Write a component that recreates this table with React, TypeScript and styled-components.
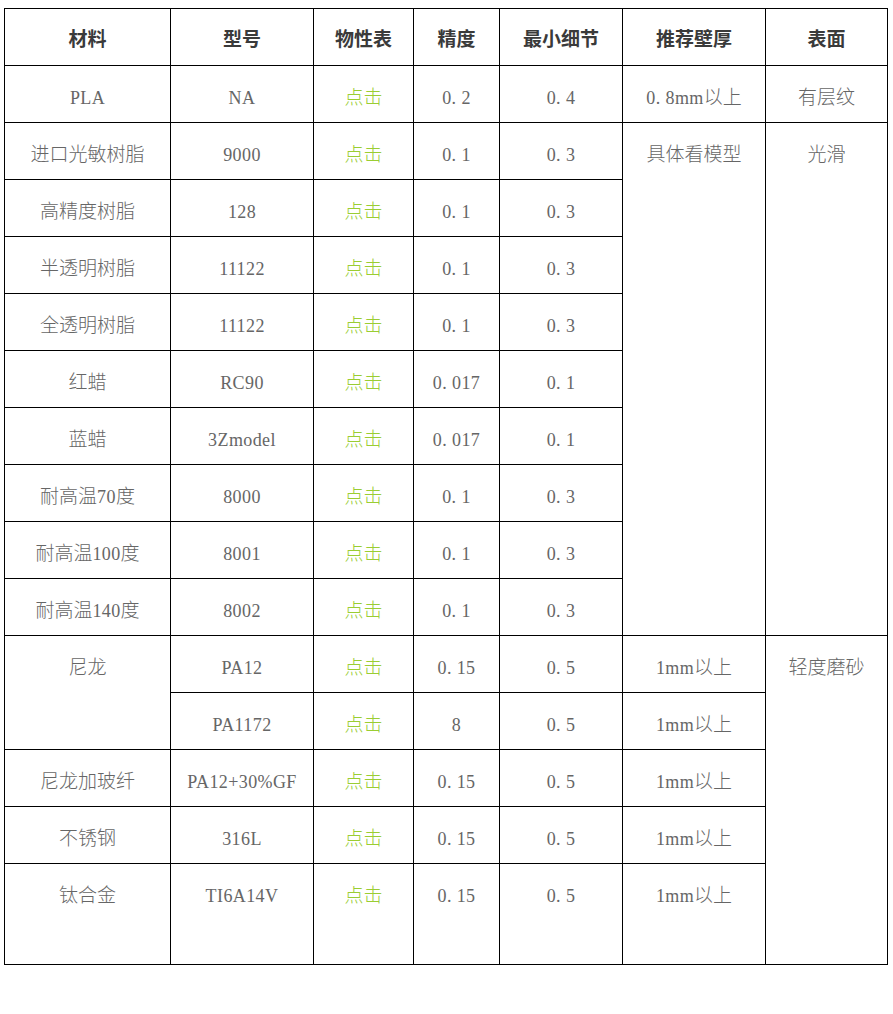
import React from 'react';
import styled, { createGlobalStyle } from 'styled-components';

const GlobalStyle = createGlobalStyle`
  html, body {
    margin: 0;
    padding: 0;
    background: #ffffff;
  }
  body {
    font-family: "Noto Sans CJK SC", "Liberation Serif", serif;
  }
`;

const Page = styled.div`
  padding: 8px 0 0 4px;
`;

const Table = styled.table`
  width: 883px;
  border-collapse: collapse;
  table-layout: fixed;
`;

const HeadCell = styled.th`
  border: 1px solid #000;
  padding: 17px 4px 0;
  height: 39px;
  line-height: 24px;
  font-size: 19px;
  font-weight: 700;
  color: #3a3a3a;
  text-align: center;
  vertical-align: top;
`;

const Cell = styled.td<{ $tall?: boolean; $link?: boolean }>`
  border: 1px solid #000;
  padding: 18px 4px 0;
  height: ${(p) => (p.$tall ? '82px' : '38px')};
  line-height: 24px;
  font-size: 19px;
  font-weight: 300;
  color: ${(p) => (p.$link ? '#9acd32' : '#666666')};
  text-align: center;
  vertical-align: top;
  white-space: nowrap;
`;

const Latin = styled.span`
  font-family: "Liberation Serif", serif;
  font-size: 18px;
  line-height: 24px;
  font-weight: 400;
  letter-spacing: 0.4px;
`;

const widths = [166, 143, 100, 86, 123, 143, 122];
const headers = ['材料', '型号', '物性表', '精度', '最小细节', '推荐壁厚', '表面'];

type CellData = { text: string; rowSpan?: number; link?: boolean };

const link: CellData = { text: '点击', link: true };

const rows: CellData[][] = [
  [{ text: 'PLA' }, { text: 'NA' }, link, { text: '0. 2' }, { text: '0. 4' }, { text: '0. 8mm以上' }, { text: '有层纹' }],
  [{ text: '进口光敏树脂' }, { text: '9000' }, link, { text: '0. 1' }, { text: '0. 3' }, { text: '具体看模型', rowSpan: 9 }, { text: '光滑', rowSpan: 9 }],
  [{ text: '高精度树脂' }, { text: '128' }, link, { text: '0. 1' }, { text: '0. 3' }],
  [{ text: '半透明树脂' }, { text: '11122' }, link, { text: '0. 1' }, { text: '0. 3' }],
  [{ text: '全透明树脂' }, { text: '11122' }, link, { text: '0. 1' }, { text: '0. 3' }],
  [{ text: '红蜡' }, { text: 'RC90' }, link, { text: '0. 017' }, { text: '0. 1' }],
  [{ text: '蓝蜡' }, { text: '3Zmodel' }, link, { text: '0. 017' }, { text: '0. 1' }],
  [{ text: '耐高温70度' }, { text: '8000' }, link, { text: '0. 1' }, { text: '0. 3' }],
  [{ text: '耐高温100度' }, { text: '8001' }, link, { text: '0. 1' }, { text: '0. 3' }],
  [{ text: '耐高温140度' }, { text: '8002' }, link, { text: '0. 1' }, { text: '0. 3' }],
  [{ text: '尼龙', rowSpan: 2 }, { text: 'PA12' }, link, { text: '0. 15' }, { text: '0. 5' }, { text: '1mm以上' }, { text: '轻度磨砂', rowSpan: 5 }],
  [{ text: 'PA1172' }, link, { text: '8' }, { text: '0. 5' }, { text: '1mm以上' }],
  [{ text: '尼龙加玻纤' }, { text: 'PA12+30%GF' }, link, { text: '0. 15' }, { text: '0. 5' }, { text: '1mm以上' }],
  [{ text: '不锈钢' }, { text: '316L' }, link, { text: '0. 15' }, { text: '0. 5' }, { text: '1mm以上' }],
  [{ text: '钛合金' }, { text: 'TI6A14V' }, link, { text: '0. 15' }, { text: '0. 5' }, { text: '1mm以上' }],
];

// latin runs get the serif face, CJK runs keep the base font
function Mixed({ text }: { text: string }) {
  const parts = text.split(/([\u3000-\u9fff\uff00-\uffef]+)/).filter(Boolean);
  return (
    <>
      {parts.map((part, i) =>
        /[\u3000-\u9fff\uff00-\uffef]/.test(part) ? (
          <span key={i}>{part}</span>
        ) : (
          <Latin key={i}>{part}</Latin>
        )
      )}
    </>
  );
}

export default function App() {
  return (
    <>
      <GlobalStyle />
      <Page>
        <Table>
          <colgroup>
            {widths.map((w, i) => (
              <col key={i} style={{ width: w }} />
            ))}
          </colgroup>
          <thead>
            <tr>
              {headers.map((h) => (
                <HeadCell key={h}>{h}</HeadCell>
              ))}
            </tr>
          </thead>
          <tbody>
            {rows.map((row, r) => (
              <tr key={r}>
                {row.map((c, i) => (
                  <Cell
                    key={i}
                    rowSpan={c.rowSpan}
                    $link={c.link}
                    $tall={r === rows.length - 1 && !c.rowSpan}
                  >
                    <Mixed text={c.text} />
                  </Cell>
                ))}
              </tr>
            ))}
          </tbody>
        </Table>
      </Page>
    </>
  );
}
